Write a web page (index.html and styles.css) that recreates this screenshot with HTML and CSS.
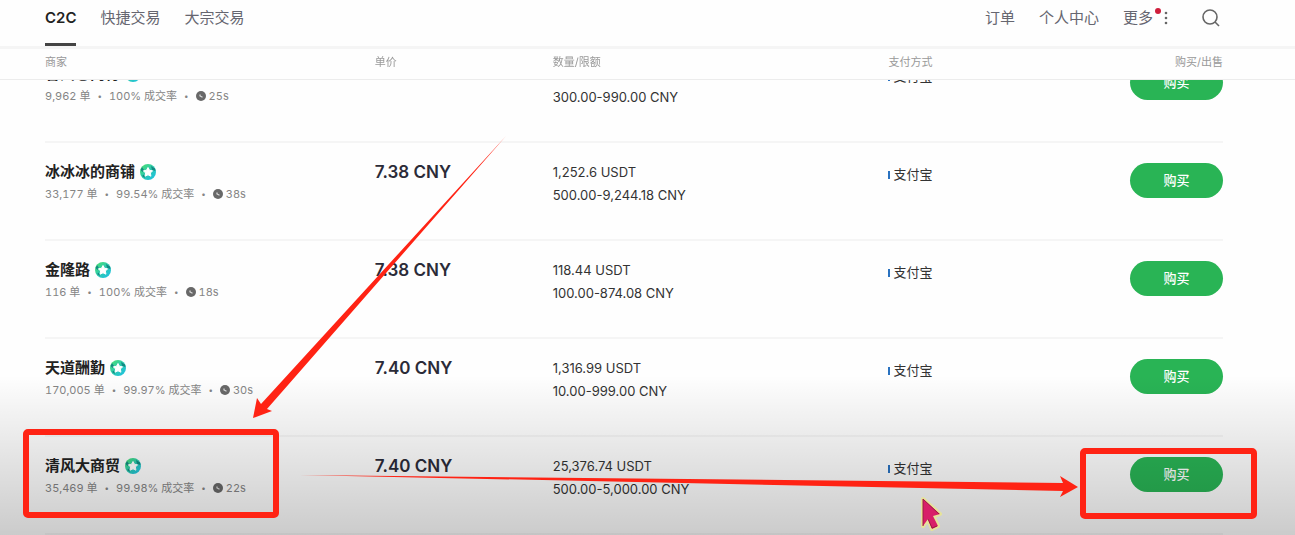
FILE: index.html
```html
<!DOCTYPE html>
<html lang="zh-CN">
<head>
    <meta charset="UTF-8">
    <meta name="viewport" content="width=device-width, initial-scale=1.0">
    <title>C2C 交易</title>
    <link rel="stylesheet" href="styles.css">
</head>
<body>
    <svg class="sprite" aria-hidden="true">
        <defs>
            <linearGradient id="badgeFill" x1="0" y1="0" x2="1" y2="1">
                <stop offset="0" stop-color="#4fe36a"/>
                <stop offset="0.5" stop-color="#2cc9b0"/>
                <stop offset="1" stop-color="#1cc0ea"/>
            </linearGradient>
        </defs>
        <symbol id="badge" viewBox="0 0 16 16">
            <circle cx="8" cy="8" r="8" fill="url(#badgeFill)"/>
            <path d="M0.500 6 L2 3 L4 6 L2.500 8 Z M11 2 L15 4.500 L15.500 7 L12 6 Z M2 12 L4 10.500 L5 14 Z" fill="#128a80"/>
            <path d="M8 3.500 L9.500 6.300 L12.600 6.800 L10.400 9 L10.900 12.200 L8 10.800 L5.100 12.200 L5.600 9 L3.400 6.800 L6.500 6.300 Z" fill="#fff" stroke="#fff" stroke-linejoin="round"/>
        </symbol>
        <symbol id="clock" viewBox="0 0 10 10">
            <circle cx="5" cy="5" r="5" fill="#686868"/>
            <path d="M4 3.500 V5 L6.500 6.300" fill="none" stroke="#ddd" stroke-width="1.200"/>
        </symbol>
    </svg>

    <header class="topbar">
        <nav class="tabs">
            <a href="#" class="tab active">C2C</a>
            <a href="#" class="tab">快捷交易</a>
            <a href="#" class="tab">大宗交易</a>
        </nav>
        <nav class="links">
            <a href="#">订单</a>
            <a href="#">个人中心</a>
            <a href="#" class="more">更多<span class="dot"></span>
                <svg width="4" height="14" viewBox="0 0 4 14" fill="#666"><circle cx="2" cy="2" r="1.300"/><circle cx="2" cy="7" r="1.300"/><circle cx="2" cy="12" r="1.300"/></svg>
            </a>
            <button class="search" aria-label="搜索">
                <svg width="18" height="18" viewBox="0 0 18 18" fill="none" stroke="#666" stroke-width="1.600"><circle cx="8" cy="8" r="7"/><path d="M13 13 L17 17"/></svg>
            </button>
        </nav>
    </header>

    <main class="list" id="list">
        <table class="offers">
            <thead>
                <tr>
                    <th class="col-merchant">商家</th>
                    <th class="col-price">单价</th>
                    <th class="col-amount">数量/限额</th>
                    <th>支付方式</th>
                    <th class="col-action">购买/出售</th>
                </tr>
            </thead>
            <tbody>
                <tr>
                    <td><div class="name">香州总内行 <svg class="badge"><use href="#badge"/></svg></div>
                        <div class="stats">9,962 单<i>•</i>100% 成交率<i>•</i><svg class="clock"><use href="#clock"/></svg>25s</div></td>
                    <td class="price"></td>
                    <td class="amount"><br>300.00-990.00 CNY</td>
                    <td class="pay"><span>支付宝</span></td>
                    <td class="col-action"><button class="buy">购买</button></td>
                </tr>
                <tr>
                    <td><div class="name">冰冰冰的商铺 <svg class="badge"><use href="#badge"/></svg></div>
                        <div class="stats">33,177 单<i>•</i>99.54% 成交率<i>•</i><svg class="clock"><use href="#clock"/></svg>38s</div></td>
                    <td class="price">7.38 CNY</td>
                    <td class="amount">1,252.6 USDT<br>500.00-9,244.18 CNY</td>
                    <td class="pay"><span>支付宝</span></td>
                    <td class="col-action"><button class="buy">购买</button></td>
                </tr>
                <tr>
                    <td><div class="name">金隆路 <svg class="badge"><use href="#badge"/></svg></div>
                        <div class="stats">116 单<i>•</i>100% 成交率<i>•</i><svg class="clock"><use href="#clock"/></svg>18s</div></td>
                    <td class="price">7.38 CNY</td>
                    <td class="amount">118.44 USDT<br>100.00-874.08 CNY</td>
                    <td class="pay"><span>支付宝</span></td>
                    <td class="col-action"><button class="buy">购买</button></td>
                </tr>
                <tr>
                    <td><div class="name">天道酬勤 <svg class="badge"><use href="#badge"/></svg></div>
                        <div class="stats">170,005 单<i>•</i>99.97% 成交率<i>•</i><svg class="clock"><use href="#clock"/></svg>30s</div></td>
                    <td class="price">7.40 CNY</td>
                    <td class="amount">1,316.99 USDT<br>10.00-999.00 CNY</td>
                    <td class="pay"><span>支付宝</span></td>
                    <td class="col-action"><button class="buy">购买</button></td>
                </tr>
                <tr>
                    <td><div class="name">清风大商贸 <svg class="badge"><use href="#badge"/></svg></div>
                        <div class="stats">35,469 单<i>•</i>99.98% 成交率<i>•</i><svg class="clock"><use href="#clock"/></svg>22s</div></td>
                    <td class="price">7.40 CNY</td>
                    <td class="amount">25,376.74 USDT<br>500.00-5,000.00 CNY</td>
                    <td class="pay"><span>支付宝</span></td>
                    <td class="col-action"><button class="buy">购买</button></td>
                </tr>
            </tbody>
        </table>
    </main>

    <div class="shade"></div>

    <!-- highlight boxes, arrows and pointer -->
    <svg class="marks" viewBox="0 0 1295 535" aria-hidden="true">
        <g fill="none" stroke="#ff2314" stroke-width="6">
            <rect x="26" y="432" width="250" height="83" rx="2"/>
            <rect x="1083" y="451" width="171" height="65" rx="2"/>
        </g>
        <g fill="#ff2314">
            <path d="M506 136 L267 409 L272 411 L253 418 L257 398 L261 404 Z"/>
            <path d="M300 475 L1063 483 L1060 476 L1078 487 L1060 497 L1063 491 Z"/>
        </g>
        <path d="M923 499 L940 514 L933 516 L938 526 L932 529 L928 519 L923 526 Z" fill="#d81f68" stroke="#e6e39a" stroke-width="4" stroke-linejoin="round" paint-order="stroke"/>
        <path d="M923 526 V499 L939 514 M928 519 L932 528 L937 526" fill="none" stroke="#9c1c40"/>
    </svg>

    <script>
        // open the list part way down its first row
        document.getElementById('list').scrollTop = 35;
    </script>
</body>
</html>
```
FILE: styles.css
```css
* {
    box-sizing: border-box;
}

body {
    margin: 0;
    height: 100vh;
    display: flex;
    flex-direction: column;
    position: relative;
    overflow: hidden;
    background: #fefefe;
    color: #222;
    font-family: Inter, "Noto Sans CJK SC", sans-serif;
    font-size: 13px;
}

a {
    color: inherit;
    text-decoration: none;
}

button {
    border: none;
    font-family: inherit;
    cursor: pointer;
}

.sprite {
    position: absolute;
    width: 0;
    height: 0;
}

.topbar {
    flex: none;
    display: flex;
    justify-content: space-between;
    padding: 0 72px 0 45px;
    border-bottom: 3px solid #f5f5f5;
    font-size: 15px;
    line-height: 36px;
    color: #666670;
}

.tabs {
    display: flex;
    gap: 24px;
}

.tab {
    height: 46px;
}

.tab.active {
    border-bottom: 3px solid #444;
    color: #222;
    font-weight: 600;
}

.links {
    display: flex;
    align-items: flex-start;
    gap: 24px;
}

.more {
    display: flex;
    align-items: center;
}

.more svg {
    margin-left: 3px;
}

.dot {
    width: 6px;
    height: 6px;
    margin: 0 0 14px 2px;
    border-radius: 50%;
    background: #cf1e3c;
}

.search {
    height: 36px;
    padding: 0 3px 0 10px;
    background: none;
}

.search svg {
    display: block;
}

.list {
    flex: 1;
    min-height: 0;
    padding: 0 72px 0 45px;
    overflow: auto;
    scrollbar-width: none;
    background: linear-gradient(#ececec, #ececec) 0 30px / 100% 1px no-repeat;
}

.offers {
    width: 100%;
    table-layout: fixed;
    border-spacing: 0;
}

.offers th {
    position: sticky;
    top: 0;
    z-index: 1;
    height: 31px;
    padding: 0 0 6px;
    border-bottom: 1px solid #ececec;
    background: #fefefe;
    color: #999;
    font-size: 11px;
    font-weight: 400;
    text-align: left;
}

.col-merchant {
    width: 28%;
}

.col-price {
    width: 15.1%;
}

.col-amount {
    width: 28.5%;
}

.offers .col-action {
    text-align: right;
}

.offers td {
    height: 98px;
    padding: 18px 0 0;
    border-bottom: 2px solid #f5f5f5;
    vertical-align: top;
}

.name {
    display: flex;
    align-items: center;
    gap: 5px;
    font-size: 15px;
    font-weight: 700;
    line-height: 22px;
}

.badge {
    width: 16px;
    height: 16px;
}

.stats {
    display: flex;
    align-items: center;
    font-size: 11px;
    font-variant-numeric: tabular-nums;
    line-height: 22px;
    color: #858585;
}

.stats i {
    margin: 0 7px;
    font-size: 8px;
    font-style: normal;
}

.clock {
    width: 10px;
    height: 10px;
    margin-right: 3px;
}

.price {
    font-size: 17px;
    font-weight: 600;
    line-height: 22px;
    color: #2b2b38;
}

.amount {
    line-height: 23px;
    color: #333;
}

.pay {
    line-height: 26px;
    color: #333;
}

.pay span::before {
    content: "";
    display: inline-block;
    width: 2px;
    height: 8px;
    margin-right: 3px;
    background: #2a72c0;
}

.buy {
    width: 93px;
    height: 35px;
    margin-top: 2px;
    padding: 0 0 2px;
    border-radius: 18px;
    background: #29b455;
    color: #fff;
    font-size: 13px;
    font-weight: 500;
}

.shade {
    position: absolute;
    inset: 70% 0 0;
    background: linear-gradient(transparent, rgba(0, 0, 0, 0.2));
    pointer-events: none;
}

.marks {
    position: absolute;
    top: 0;
    left: 0;
    width: 100%;
    pointer-events: none;
}
```
